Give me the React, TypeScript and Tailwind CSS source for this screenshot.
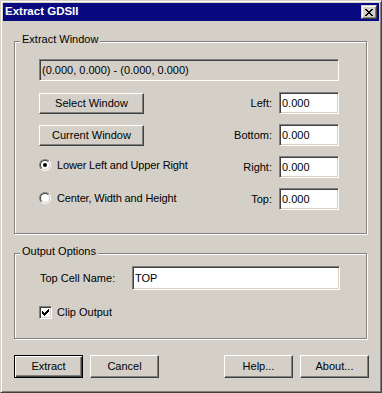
import React from "react";

const raised =
  "border border-t-white border-l-white border-r-[#404040] border-b-[#404040] shadow-[inset_-1px_-1px_0_#808080]";
const sunken =
  "border border-t-[#808080] border-l-[#808080] border-r-white border-b-white shadow-[inset_1px_1px_0_#404040,inset_-1px_-1px_0_#d4d0c8]";

function Btn({ label, w, h, isDefault }: { label: string; w: string; h: string; isDefault?: boolean }) {
  const frame = isDefault
    ? "border border-black shadow-[inset_1px_1px_0_white,inset_-1px_-1px_0_#404040,inset_-2px_-2px_0_#808080]"
    : raised;
  return <div className={`${w} ${h} ${frame} flex items-center justify-center bg-[#d4d0c8]`}>{label}</div>;
}

function Edit({ value, className, gray }: { value: string; className: string; gray?: boolean }) {
  return (
    <div className={`${className} ${sunken} ${gray ? "bg-[#d4d0c8]" : "bg-white"} flex items-center pl-[2px]`}>
      {value}
    </div>
  );
}

function Radio({ checked }: { checked?: boolean }) {
  return (
    <div className="w-[12px] h-[12px] rounded-full border border-t-[#808080] border-l-[#808080] border-r-white border-b-white">
      <div className="w-full h-full rounded-full border border-t-[#404040] border-l-[#404040] border-r-[#d4d0c8] border-b-[#d4d0c8] bg-white flex items-center justify-center">
        {checked && <div className="w-[4px] h-[4px] rounded-full bg-black" />}
      </div>
    </div>
  );
}

function Check() {
  const cols = [
    [1, 3], [2, 4], [3, 5], [4, 4], [5, 3], [6, 2], [7, 1],
  ];
  return (
    <div className={`w-[13px] h-[13px] ${sunken} bg-white`}>
      <svg width="9" height="9" viewBox="0 0 9 9" className="m-[1px]" shapeRendering="crispEdges">
        {cols.map(([x, y]) => (
          <rect key={x} x={x} y={y} width="1" height="3" fill="black" />
        ))}
      </svg>
    </div>
  );
}

function CloseGlyph() {
  const rows = [
    [0, 1, 6, 7], [1, 2, 5, 6], [2, 3, 4, 5], [3, 4], [2, 3, 4, 5], [1, 2, 5, 6], [0, 1, 6, 7],
  ];
  return (
    <svg width="8" height="7" viewBox="0 0 8 7" shapeRendering="crispEdges">
      {rows.map((r, y) => r.map((x) => <rect key={`${x}-${y}`} x={x} y={y} width="1" height="1" fill="black" />))}
    </svg>
  );
}

function Group({ title, className, children }: { title: string; className: string; children: React.ReactNode }) {
  return (
    <div className={`relative border border-[#808080] shadow-[inset_1px_1px_0_white,1px_1px_0_white] ${className}`}>
      <span className="absolute left-[5px] top-[-10px] bg-[#d4d0c8] px-[2px] leading-[14px]">{title}</span>
      {children}
    </div>
  );
}

function Coord({ label, value }: { label: string; value: string }) {
  return (
    <div className="flex items-center gap-[7px]">
      <span>{label}</span>
      <Edit value={value} className="w-[60px] h-[22px]" />
    </div>
  );
}

export default function App() {
  return (
    <div className="w-[382px] h-[393px] bg-[#d4d0c8] border border-t-[#d4d0c8] border-l-[#d4d0c8] border-r-[#404040] border-b-[#404040] shadow-[inset_1px_1px_0_white,inset_-1px_-1px_0_#808080] p-[2px] flex flex-col [font-family:'Liberation_Sans',Arial,sans-serif] text-[11px] text-black">
      <div className="h-[18px] bg-[#0a0a80] flex items-center justify-between pl-[2px] pr-[2px]">
        <span className="text-white font-bold text-[11.5px]">Extract GDSII</span>
        <div className="w-[16px] h-[14px] border border-t-[#d4d0c8] border-l-[#d4d0c8] border-r-[#404040] border-b-[#404040] shadow-[inset_1px_1px_0_white,inset_-1px_-1px_0_#808080] bg-[#d4d0c8] flex items-center justify-center">
          <CloseGlyph />
        </div>
      </div>

      <div className="flex flex-col pl-[11px] pt-[20px]">
        <Group title="Extract Window" className="w-[353px] h-[193px] pt-[17px] pl-[24px]">
          <Edit value="(0.000, 0.000) - (0.000, 0.000)" className="w-[300px] h-[22px]" gray />
          <div className="w-[300px] mt-[11px] flex flex-col gap-[10px]">
            <div className="h-[22px] flex items-center justify-between">
              <Btn label="Select Window" w="w-[105px]" h="h-[21px]" />
              <Coord label="Left:" value="0.000" />
            </div>
            <div className="h-[22px] flex items-center justify-between">
              <Btn label="Current Window" w="w-[105px]" h="h-[21px]" />
              <Coord label="Bottom:" value="0.000" />
            </div>
            <div className="h-[22px] flex items-center justify-between">
              <div className="flex items-center gap-[6px] -mt-[4px] tracking-[-0.15px]">
                <Radio checked />
                <span>Lower Left and Upper Right</span>
              </div>
              <Coord label="Right:" value="0.000" />
            </div>
            <div className="h-[22px] flex items-center justify-between">
              <div className="flex items-center gap-[6px] -mt-[2px] tracking-[-0.15px]">
                <Radio />
                <span>Center, Width and Height</span>
              </div>
              <Coord label="Top:" value="0.000" />
            </div>
          </div>
        </Group>

        <Group title="Output Options" className="mt-[19px] w-[353px] h-[86px] pt-[12px] pl-[24px]">
          <div className="flex items-center">
            <span className="w-[93px] pl-[1px]">Top Cell Name:</span>
            <Edit value="TOP" className="w-[208px] h-[24px]" />
          </div>
          <div className="flex items-center gap-[5px] mt-[14px]">
            <Check />
            <span>Clip Output</span>
          </div>
        </Group>

        <div className="w-[355px] mt-[16px] flex justify-between">
          <div className="flex gap-[7px]">
            <Btn label="Extract" w="w-[69px]" h="h-[23px]" isDefault />
            <Btn label="Cancel" w="w-[69px]" h="h-[23px]" />
          </div>
          <div className="flex gap-[7px]">
            <Btn label="Help..." w="w-[69px]" h="h-[23px]" />
            <Btn label="About..." w="w-[69px]" h="h-[23px]" />
          </div>
        </div>
      </div>
    </div>
  );
}
